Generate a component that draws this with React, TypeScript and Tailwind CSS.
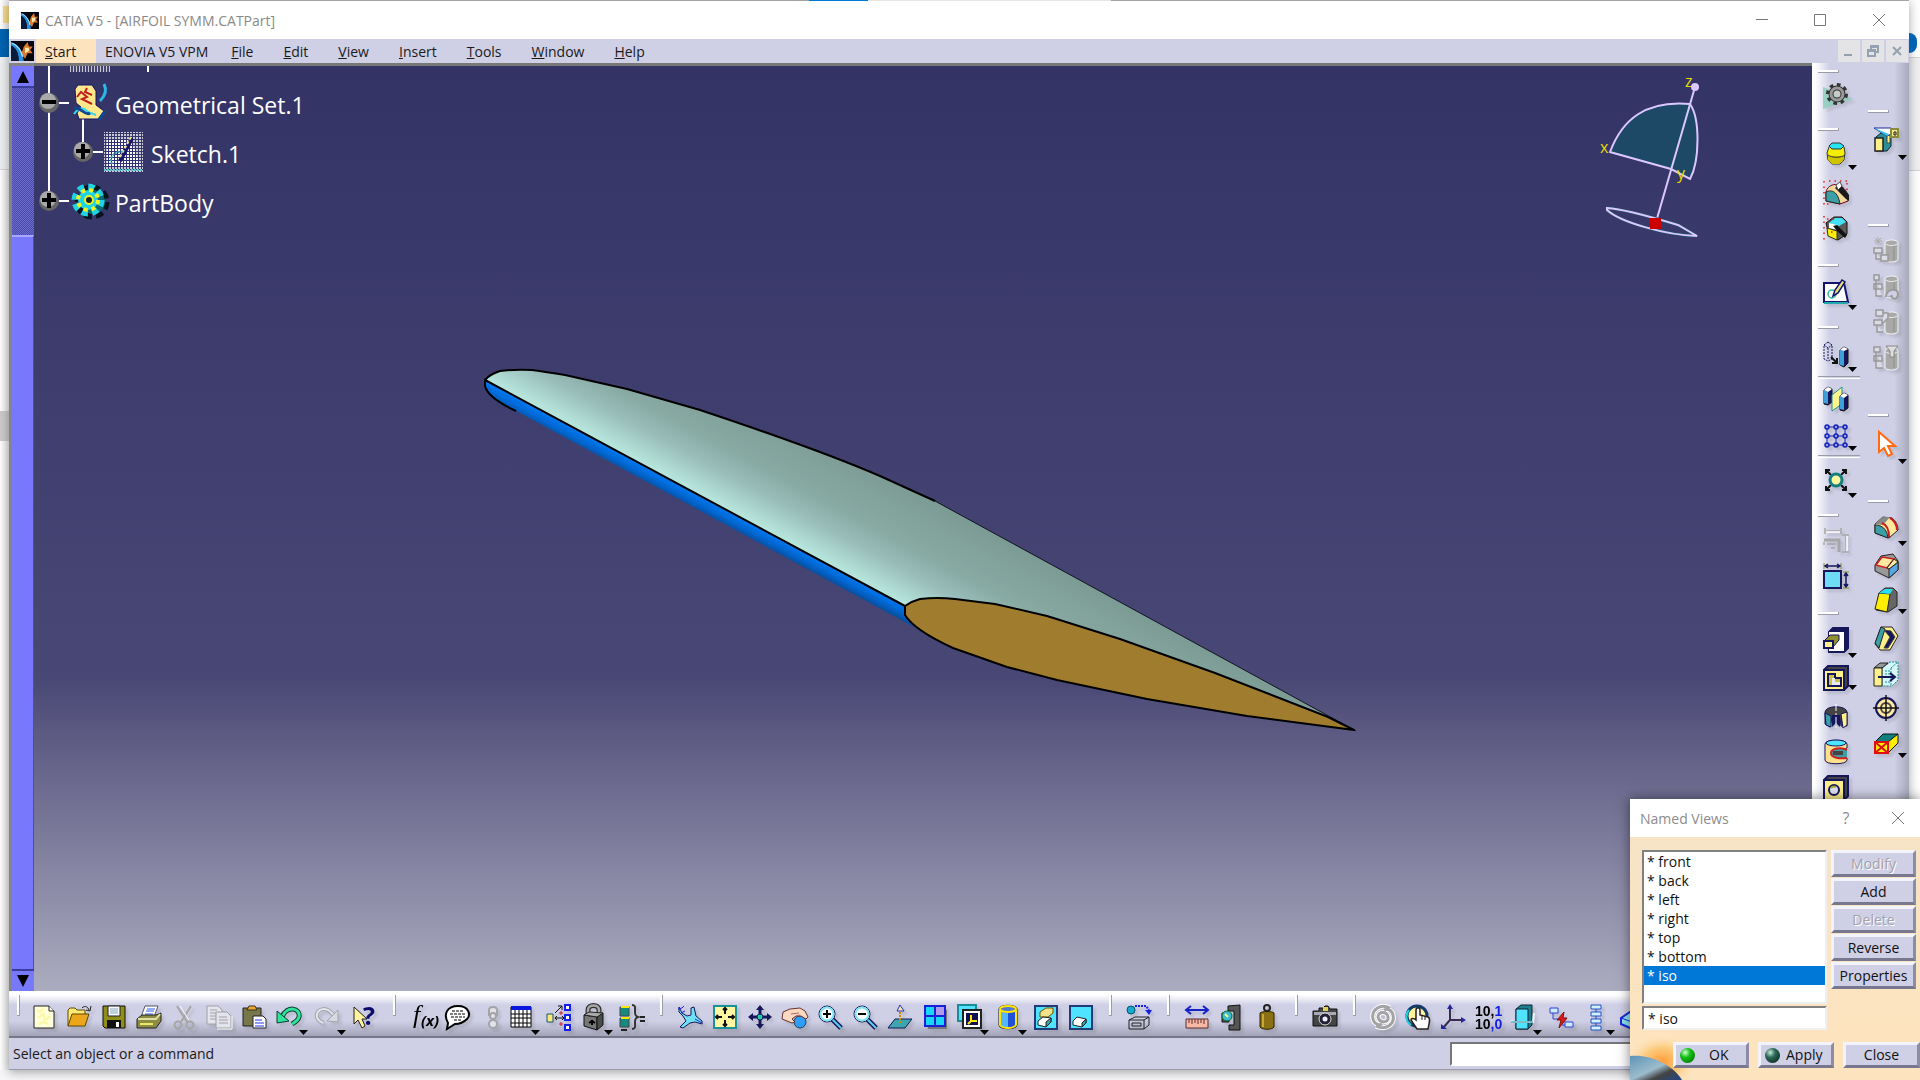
import React from "react";

const N = "#16165a";
const TEAL = "#3b9fa6";
const CREAM = "#fff08c";
const CYAN = "#4fe3ff";

const grayCylinder = (
  <>
    <path d="M12 6c0-4 13-4 13 0v16c0 4-13 4-13 0z" fill="#a9a9a9" stroke="#f4f4f4" />
    <path d="M13 7c2 2 9 2 11 0" stroke="#eee" fill="none" />
    <path d="M21 9v14" stroke="#8f8f8f" />
  </>
);

const icons: Record<string, React.ReactNode> = {
  newFile: (
    <>
      <path d="M3 2h15l5 5v17H3z" fill="#ffffd9" stroke="#222" />
      <path d="M6 6l3 2 3-3M7 14l5-4 2 6 5-4M8 20l4-2 5 2" stroke="#fdf7a0" fill="none" strokeWidth="2" />
      <path d="M18 2v5h5" fill="#fff" stroke="#222" />
    </>
  ),
  open: (
    <>
      <path d="M2 22V6l2-2h5l2 2h8v4" fill="#ffe873" stroke="#5a4a00" />
      <path d="M2 22l4-12h17l-4 12z" fill="#eda51c" stroke="#5a4a00" />
      <path d="M16 4c3-3 6-1 7 2M25 2l-1 5-4-1" fill="none" stroke="#222" />
    </>
  ),
  save: (
    <>
      <path d="M2 2h22v22H4l-2-2z" fill="#8f8f17" stroke="#111" />
      <path d="M7 2h12v10H7z" fill="#f4f8ff" stroke="#222" />
      <path d="M9 5h8M9 7h8M9 9h8" stroke="#8ab" />
      <path d="M6 16h14v8H6z" fill="#111" />
      <path d="M15 18h3v5h-3z" fill="#fff" />
    </>
  ),
  print: (
    <>
      <path d="M9 2h13l-4 11H5z" fill="#fff" stroke="#556" />
      <path d="M11 5h8M10 7h8M9 10h8" stroke="#2a5cff" />
      <path d="M1 15l5-4h14l5-2v8l-5 7H1z" fill="#8c8c45" stroke="#222" />
      <path d="M2 15h18l4-5" fill="none" stroke="#dfe0a4" strokeWidth="2" />
      <path d="M4 20h13" stroke="#e9e96a" strokeWidth="2" />
    </>
  ),
  cut: (
    <g stroke="#a6a6a6" fill="none" strokeWidth="2">
      <path d="M6 2l10 16M20 2L10 18" />
      <circle cx="7" cy="21" r="3.5" />
      <circle cx="19" cy="21" r="3.5" />
      <path d="M9 2l9 14" stroke="#fff" strokeWidth="1" />
    </g>
  ),
  copy: (
    <g stroke="#a0a0a0" fill="#e4e4ef">
      <path d="M1 2h11l4 4v14H1z" />
      <path d="M4 6h7M4 9h8M4 12h8M4 15h6" />
      <path d="M10 8h11l4 4v12H10z" />
      <path d="M13 13h8M13 16h9M13 19h9" />
      <path d="M26 12v13H11" stroke="#fff" fill="none" />
    </g>
  ),
  paste: (
    <>
      <path d="M2 4h18v18H2z" fill="#77774a" stroke="#222" />
      <path d="M6 6l2-4h6l2 4z" fill="#f5a623" stroke="#333" />
      <path d="M12 12h10l3 3v9H12z" fill="#fff" stroke="#223" />
      <path d="M14 16h7M14 19h9M14 22h9" stroke="#1c35e8" />
    </>
  ),
  undo: (
    <>
      <path d="M6 13C11 1 25 4 23 13c-1 4-4 5-7 7" fill="none" stroke="#0c3d33" strokeWidth="5" />
      <path d="M6 13C11 1 25 4 23 13c-1 4-4 5-7 7" fill="none" stroke="#2fe39c" strokeWidth="3" />
      <path d="M1 7v12l12-2z" fill="#2fe39c" stroke="#0c3d33" />
    </>
  ),
  redo: (
    <>
      <path d="M20 13C15 1 1 4 3 13c1 4 4 5 6 6" fill="none" stroke="#a4a4a8" strokeWidth="4" />
      <path d="M20 13C15 1 1 4 3 13c1 4 4 5 6 6" fill="none" stroke="#e6e6ef" strokeWidth="2" />
      <path d="M24 6v12l-11-1z" fill="#d8d8e2" stroke="#a4a4a8" />
    </>
  ),
  help: (
    <>
      <path d="M2 3v17l4-4 4 8 3-2-3-7h5z" fill="#fff3a0" stroke="#222" />
      <text x="11" y="21" fontSize="25" fontWeight="bold" fill="#0b0b6b" fontFamily="Open Sans, sans-serif">?</text>
    </>
  ),
  fx: (
    <>
      <text x="3" y="19" fontSize="26" fontStyle="italic" fill="#000" fontFamily="Liberation Serif, serif">f</text>
      <text x="11" y="22" fontSize="15" fontWeight="bold" fontStyle="italic" fill="#000" fontFamily="Open Sans, sans-serif">(x)</text>
    </>
  ),
  bubble: (
    <>
      <path d="M3 19C-2 10 2 2 13 2s13 9 9 13-9 5-12 5L2 25z" fill="#fff" stroke="#000" strokeWidth="2" />
      <path d="M7 7h12M5 10h16M6 13h14M9 16h8" stroke="#000" strokeDasharray="3 1" />
    </>
  ),
  chain: (
    <g fill="#e2e2ea" stroke="#a4a4a8" strokeWidth="2">
      <path d="M9 12V6c0-4 8-4 8 0v6" />
      <circle cx="13" cy="12" r="3" />
      <circle cx="13" cy="20" r="4" />
    </g>
  ),
  table: (
    <>
      <path d="M3 3h20v20H3z" fill="#fff" stroke="#000" />
      <path d="M3 2h20v4H3z" fill="#0a16e0" />
      <path d="M3 10h20M3 14h20M3 19h20M7 6v17M11 6v17M15 6v17M19 6v17" stroke="#000" />
    </>
  ),
  tree: (
    <>
      <path d="M1 10h6v8H1z" fill="#ffe873" stroke="#157" />
      <path d="M19 1h5v5h-5zM19 11h5v5h-5zM19 21h5v5h-5z" fill="#fff" stroke="#1420e8" strokeWidth="2" />
      <path d="M9 14h9M9 9l7-7M16 12l2 2-2 2M12 2h4v4M11 12l-2 2 2 2" fill="none" stroke="#111" />
      <path d="M15 7v4M13 9h4M15 18v4M13 20h4" stroke="#d0202c" />
    </>
  ),
  lock: (
    <>
      <path d="M7 12V6c0-6 11-6 11 0v7" fill="none" stroke="#333" strokeWidth="5" />
      <path d="M7 12V6c0-6 11-6 11 0v7" fill="none" stroke="#a8a8a8" strokeWidth="2.500" />
      <path d="M3 11l13 2v13L3 22z" fill="#777" stroke="#111" />
      <path d="M16 13l6-4v12l-6 5z" fill="#4c4c4c" stroke="#111" />
      <path d="M3 11l5-3 14 1-6 4z" fill="#aaa" stroke="#222" />
      <path d="M11 16v5M8 19l3-2 3 2" stroke="#000" strokeWidth="2" />
    </>
  ),
  formula: (
    <>
      <path d="M1 3h9v9H1zM1 14h9v9H1z" fill="#148a80" stroke="#444" />
      <path d="M2 3h8M2 14h8" stroke="#ffe600" strokeWidth="2" />
      <path d="M13 1c4 0 3 3 3 6s0 5 3 6c-3 1-3 3-3 6s1 6-3 6" fill="none" stroke="#333" strokeWidth="2" />
      <path d="M21 13h5M21 17h5M2 26h6" stroke="#222" strokeWidth="2" />
    </>
  ),
  plane: (
    <>
      <path d="M2 3l3 6 5 3 4-1V4l3-1 2 9 6 5v3l-7-2-5 1-7 5-3-1 6-6-3-5-4-4z" fill="#6fe0f5" stroke={N} />
      <path d="M1 5l4-1 2-2M4 9l4-2M18 15l7 4" stroke="#1a27e0" fill="none" />
    </>
  ),
  fit: (
    <>
      <path d="M2 2h22v22H2z" fill="#fff8a0" stroke="#1b9299" strokeWidth="2" />
      <path d="M13 4v6M13 16v6M4 13h6M16 13h6M11 6l2-2 2 2M11 20l2 2 2-2M6 11l-2 2 2 2M20 11l2 2-2 2" stroke="#111" fill="none" strokeWidth="2" />
    </>
  ),
  pan: (
    <>
      <path d="M13 3v20M3 13h20" stroke={N} strokeWidth="3" />
      <path d="M13 1l4 5H9zM13 25l4-5H9zM1 13l5-4v8zM25 13l-5-4v8z" fill={N} />
      <circle cx="13" cy="13" r="3" fill="#2ca" stroke={N} />
    </>
  ),
  rotate: (
    <>
      <circle cx="18" cy="18" r="6" fill="#2f9cf5" stroke="#146" />
      <path d="M1 8l7-3 10-1 5 3 3 6-2 2-5-3h-5l-4 3 3 3-3 1-5-2-5-2z" fill="#fbd9c0" stroke="#633" />
      <path d="M9 10l8-1M14 12l4-1" stroke="#a66" />
    </>
  ),
  zoomIn: (
    <>
      <path d="M15 15l9 9" stroke={N} strokeWidth="5" />
      <path d="M15 15l9 9" stroke="#59d4f0" strokeWidth="2" />
      <circle cx="10" cy="10" r="8" fill="#fff" stroke={N} />
      <circle cx="10" cy="10" r="6.500" fill="none" stroke="#7be4ef" strokeWidth="2" />
      <path d="M10 6v8M6 10h8" stroke="#000" strokeWidth="2" />
    </>
  ),
  zoomOut: (
    <>
      <path d="M15 15l9 9" stroke={N} strokeWidth="5" />
      <path d="M15 15l9 9" stroke="#59d4f0" strokeWidth="2" />
      <circle cx="10" cy="10" r="8" fill="#fff" stroke={N} />
      <circle cx="10" cy="10" r="6.500" fill="none" stroke="#7be4ef" strokeWidth="2" />
      <path d="M6 10h8" stroke="#000" strokeWidth="2" />
    </>
  ),
  normal: (
    <>
      <path d="M8 15h17l-7 9H1z" fill="#3ba5b0" stroke={N} />
      <path d="M13 19V8" stroke="#c78a00" strokeWidth="2" strokeDasharray="2 1" />
      <path d="M10 7l3-6 4 6z" fill="#ffe9a0" stroke="#2030d0" />
    </>
  ),
  multi: (
    <>
      <path d="M6 6h19v19H6z" fill="#777" />
      <path d="M3 2h20v20H3z" fill="#19d7f5" stroke="#1820d8" strokeWidth="2" />
      <path d="M13 2v20M3 12h20" stroke="#1820d8" strokeWidth="2" />
      <path d="M14 3h8v8h-8z" fill="#b09be8" />
    </>
  ),
  views: (
    <>
      <path d="M1 1h18v16H1z" fill={CYAN} stroke="#1b8c96" strokeWidth="2" />
      <path d="M6 6h18v18H6z" fill="#fff" stroke="#222" strokeWidth="2" />
      <path d="M9 9h12v12H9z" fill="#101050" />
      <path d="M14 11v6h6M14 17l-3 3" stroke="#ffe600" strokeWidth="2" fill="none" />
    </>
  ),
  cylinder: (
    <>
      <path d="M4 5c0-5 18-5 18 0v16c0 5-18 5-18 0z" fill="#1e50d8" stroke="#111" />
      <path d="M6 7v14c2 3 4 3 7 3V9c-3 0-5 0-7-2z" fill="#53b6ff" />
      <ellipse cx="13" cy="5" rx="8" ry="3" fill="#5577cc" stroke="#ffe600" strokeWidth="2" />
      <path d="M5 6v15c3 4 13 4 16 0V6" fill="none" stroke="#ffe600" strokeWidth="2" />
    </>
  ),
  hideShow: (
    <>
      <path d="M2 2h22v23H2z" fill={CYAN} stroke="#223a78" strokeWidth="2" />
      <path d="M7 8l6-4h7v5l-5 4H7z" fill="#efe28a" stroke="#665500" />
      <path d="M5 17l5-4 8 1v4l-5 5-8-2z" fill="#fff" stroke="#222" />
      <path d="M13 18l5-4v4l-5 5z" fill={TEAL} stroke="#222" />
    </>
  ),
  swap: (
    <>
      <path d="M2 2h22v23H2z" fill={CYAN} stroke="#223a78" strokeWidth="2" />
      <path d="M5 17l4-4 9 2v4l-4 4-9-2z" fill="#fff" stroke="#222" />
      <path d="M14 19l4-4v4l-4 4z" fill={TEAL} stroke="#222" />
    </>
  ),
  catalog: (
    <>
      <circle cx="5" cy="6" r="4" fill="#18a8d0" stroke="#056" />
      <path d="M9 2h11l3 4" stroke="#1420e8" fill="none" strokeWidth="2" strokeDasharray="2 1" />
      <path d="M19 6h7l-3 5z" fill="#1420e8" />
      <path d="M3 16l6-3h14v8l-5 4H3zM3 16h15v9M18 16l5-3M6 19h9v3H6z" fill="none" stroke="#222" />
    </>
  ),
  ruler: (
    <>
      <path d="M3 6h20M7 2L2 6l5 4M19 2l5 4-5 4" stroke="#1722c8" fill="none" strokeWidth="2" />
      <path d="M2 15h22v9H2z" fill="#f7b9a4" stroke="#5b2c2c" />
      <path d="M5 15v4M8 15v5M11 15v4M14 15v5M17 15v4M20 15v5" stroke="#5b2c2c" />
    </>
  ),
  caliper: (
    <>
      <path d="M9 2l12-1v25H10v-5h5V7H9z" fill="#555" stroke="#111" />
      <path d="M3 9h7v9H3z" fill="#555" stroke="#111" />
      <circle cx="8" cy="12" r="5" fill="#3bbdd0" stroke="#163" />
      <path d="M6 10l3 3" stroke="#ff8" strokeWidth="2" />
    </>
  ),
  weight: (
    <>
      <circle cx="13" cy="4" r="3" fill="none" stroke="#222" strokeWidth="2" />
      <path d="M6 9c2-2 12-2 14 0v14c-2 3-12 3-14 0z" fill="#8a7012" stroke="#2b2200" />
      <path d="M9 10v13" stroke="#c7a83a" strokeWidth="2" />
    </>
  ),
  camera: (
    <>
      <path d="M1 7h6V4h4L13 2h3l2 3h7v17H1z" fill="#444" stroke="#111" />
      <path d="M2 8h22v3H2z" fill="#a9a9b4" />
      <path d="M11 3h5v4h-5z" fill="#e2d25a" />
      <circle cx="13" cy="15" r="6" fill="#223" stroke="#ddd" />
      <circle cx="13" cy="15" r="2.500" fill="#eef" />
    </>
  ),
  swirl: (
    <g fill="none">
      <path d="M20 4C10-1 1 6 3 15c1 5 6 7 9 5M6 22c10 5 19-2 17-11-1-5-6-7-9-5M8 13c0-6 9-6 10 0s-8 7-10 0z" stroke="#fff" strokeWidth="5" />
      <path d="M20 4C10-1 1 6 3 15c1 5 6 7 9 5M6 22c10 5 19-2 17-11-1-5-6-7-9-5M8 13c0-6 9-6 10 0s-8 7-10 0z" stroke="#a3a3a6" strokeWidth="3" />
    </g>
  ),
  hand: (
    <>
      <circle cx="12" cy="12" r="10" fill="#fff39a" stroke="#123a6b" strokeWidth="3" />
      <path d="M4 6a10 10 0 0 0 2 15" stroke="#1fd1d9" strokeWidth="2" fill="none" />
      <path d="M11 6c0-3 4-3 4 0v5l8 2c3 1 1 7 0 12H12l-6-9c0-2 3-2 5 0z" fill="#fff" stroke="#222" strokeWidth="1.500" />
      <path d="M17 12v4M20 13v3" stroke="#222" />
    </>
  ),
  axis: (
    <>
      <path d="M10 16V3M10 16h13M10 16l-7 8" stroke="#3a2a50" strokeWidth="2" />
      <path d="M7 5l3-5 3 5zM21 13l5 3-5 3zM1 20v5h6z" fill="#26269c" />
    </>
  ),
  digits: (
    <>
      <text x="0" y="12" fontSize="14" fontWeight="bold" fill="#000" fontFamily="Liberation Sans, sans-serif">
        10,<tspan fill="#1420e8">1</tspan>
      </text>
      <text x="0" y="25" fontSize="14" fontWeight="bold" fill="#000" fontFamily="Liberation Sans, sans-serif">
        10<tspan fill="#1420e8">,0</tspan>
      </text>
    </>
  ),
  stock: (
    <>
      <path d="M6 5l5-4h11v20l-4 4H6z" fill="#1b7f8c" stroke="#123" />
      <path d="M6 5h12v20H6z" fill={CYAN} stroke="#123" />
      <path d="M2 16v2h21l1-9" fill="none" stroke="#e8f8ff" strokeWidth="2" />
      <path d="M1 18h22" stroke="#1b7f8c" />
    </>
  ),
  flash: (
    <>
      <path d="M2 4h8v5H2zM17 18h8v5h-8z" fill="#cfeaff" stroke="#2b44d8" />
      <path d="M5 9v6h6M14 21h3" stroke="#2b44d8" fill="none" />
      <path d="M16 8l-7 8h4l-2 8 8-10h-4z" fill="#e01818" stroke="#801010" />
    </>
  ),
  bars: (
    <>
      <path d="M13 1v24" stroke="#2b44d8" />
      <path d="M8 1h10v4H8zM8 8h10v4H8zM8 15h10v4H8zM8 22h10v4H8z" fill="#d3f1f6" stroke="#2352c8" />
    </>
  ),
  solid: (
    <>
      <path d="M12 6l12-5v18l-10 7-14-6v-6z" fill="#8fe9f5" stroke="#1a27e0" strokeWidth="2" />
      <path d="M0 14l14 5M14 19v7M14 19L24 9" stroke="#1a27e0" />
    </>
  ),
  gear: (
    <>
      <path d="M0 6v22l30-10z" fill="#8ecfbd" opacity=".85" />
      <circle cx="14" cy="13" r="9" fill="none" stroke="#333" strokeWidth="4" strokeDasharray="3.500 3.500" />
      <circle cx="14" cy="13" r="6" fill="#c4ccc8" stroke="#333" strokeWidth="5" />
      <circle cx="14" cy="13" r="6" fill="none" stroke="#999" strokeWidth="3" />
    </>
  ),
  barrel: (
    <>
      <path d="M6 6l2-3h10l3 3 1 6-1 7-4 4H9l-4-4-1-7z" fill="#f6ee00" stroke="#333" />
      <path d="M5 15h16l-1 5-4 3H9l-4-4z" fill="#cfc400" />
      <path d="M6 5l3-3h8l4 3-3 3H9z" fill="#26e5f5" stroke="#333" />
      <path d="M5 14c4 3 13 3 17 0" fill="none" stroke="#333" />
    </>
  ),
  dots: (
    <>
      <path d="M3 13c2-9 16-12 22 3v6l-8 3-14-3z" fill="#f4d89a" stroke="#702" />
      <path d="M3 13c6-3 12 0 14 12L3 22z" fill={TEAL} stroke="#222" />
      <path d="M12 9l5-4 9 11v6l-3-2z" fill="#1a1a1a" />
      <path d="M13 6l4-3 2 4-4 4z" fill="#fff" stroke="#444" />
      <path d="M1 2v24M6 2h18M4 25h4M24 4v8" stroke="#e02020" strokeWidth="1.500" strokeDasharray="1.500 4" />
    </>
  ),
  cube: (
    <>
      <path d="M3 8l8-6h8l5 5v12l-9 6-9-4z" fill="#5a5a5a" stroke="#111" />
      <path d="M4 13l10 3v9l-9-4z" fill="#ffee00" stroke="#333" />
      <path d="M6 8l6-5h7l4 4-7 4z" fill="#43dff5" />
      <path d="M6 8l8 2 1 5-9-2z" fill="#fff" />
      <path d="M10 11l4-1 10 10-2 3-7-6z" fill="#111" />
      <path d="M1 1v24M4 4h9M8 17h5" stroke="#e02020" strokeWidth="1.500" strokeDasharray="1.500 4" />
    </>
  ),
  sketch: (
    <>
      <path d="M1 4h20l4 19H1z" fill="#fff" stroke="#14146e" strokeWidth="2" />
      <path d="M1 24h24" stroke="#2aa" strokeWidth="2" />
      <circle cx="9" cy="15" r="4" fill="none" stroke="#3b9" strokeWidth="1.500" />
      <path d="M10 17l2-6 7-10 3 2-7 11z" fill="#e6e07a" stroke="#14146e" strokeWidth="1.500" />
    </>
  ),
  translate: (
    <>
      <path d="M5 1l4 3v14l-4 2-4-2V4zM1 4l4 3 4-3M5 7v12" fill="none" stroke={N} strokeDasharray="2 1" />
      <path d="M8 16l6 6M14 17v5H9" stroke="#111" strokeWidth="2" fill="none" />
      <path d="M17 9l4-3 4 2v14l-4 4-4-2z" fill={N} stroke="#111" />
      <path d="M17 9l4 1v15l-4-1z" fill="#3f9fd8" />
      <path d="M17 9l4-3 4 2-4 2z" fill="#fff" />
    </>
  ),
  mirror: (
    <>
      <path d="M1 4l4-3 4 2v13l-4 3-4-1z" fill={N} stroke="#111" />
      <path d="M1 4l4 2v12l-4-1z" fill="#3f9fd8" />
      <path d="M9 9l10-8v17L9 25z" fill="#fff48e" stroke="#1a8f8f" />
      <path d="M17 10l4-3 4 2v13l-4 3-4-1z" fill={N} stroke="#111" />
      <path d="M17 10l4 2v12l-4-1z" fill="#3f9fd8" />
      <path d="M1 4l4-3 4 2-4 3zM17 10l4-3 4 2-4 3z" fill="#fff" />
    </>
  ),
  pattern: (
    <g stroke="#1320b8" fill="#9aa0d8" strokeWidth="1.500">
      <path d="M4 3h18M4 12h18M4 21h18M4 3v18M13 3v18M22 3v18" fill="none" strokeWidth="1" />
      {[3, 12, 21].map((y) => [4, 13, 22].map((x) => <circle key={`${x}-${y}`} cx={x} cy={y} r="2" />))}
    </g>
  ),
  scale: (
    <>
      <path d="M3 7V3h4M19 3h4v4M3 19v4h4M23 19v4h-4M3 3l5 5M23 3l-5 5M3 23l5-5M23 23l-5-5" fill="none" stroke="#111" strokeWidth="2" />
      <circle cx="13" cy="13" r="6" fill="#fff7a0" stroke="#137f7f" strokeWidth="3" />
    </>
  ),
  dimsGray: (
    <g stroke="#a6a6a8" fill="none" strokeWidth="1.500">
      <path d="M2 1v6M18 1v6M3 4h14M19 8h7M19 25h7M23 9v15M4 17h9M8 21h4M1 15v3" />
      <path d="M1 13h15v12" strokeWidth="3" />
      <path d="M3 5h14M24 9v15" stroke="#fff" />
    </g>
  ),
  dims: (
    <>
      <path d="M1 8h17v17H1z" fill="#6fdcf5" stroke={N} strokeWidth="2" />
      <path d="M1 0v6M18 0v6M20 9h6M20 25h6" stroke="#8b8b20" />
      <path d="M2 3h15M5 1L2 3l3 2M14 1l3 2-3 2M23 10v14M21 13l2-3 2 3M21 21l2 3 2-3" stroke={N} fill="none" strokeWidth="1.500" />
    </>
  ),
  pad: (
    <>
      <path d="M6 5l4-4h15v20l-4 4H6z" fill={N} stroke={N} strokeWidth="2" />
      <path d="M6 5h15v19H6z" fill="#fff" />
      <path d="M1 14l6-6h9v5l-6 7H1z" fill="#8f8f30" stroke={N} />
      <path d="M1 14h9v7H1z" fill={CREAM} stroke={N} strokeWidth="2" />
    </>
  ),
  pocket: (
    <>
      <path d="M1 5l4-4h20v20l-4 4H1z" fill="#444" stroke={N} strokeWidth="2" />
      <path d="M1 5h20v20H1z" fill={CREAM} stroke={N} strokeWidth="2" />
      <path d="M5 9h7v4h6v8H5z" fill="#c7c04a" stroke={N} strokeWidth="2" />
      <path d="M9 13h3v4h5v3H9z" fill="#e8e8f4" />
    </>
  ),
  shaft: (
    <>
      <path d="M2 9c1-7 21-7 22 0v14h-6l-1-8h-8l-2 9-5-3z" fill="#444" stroke={N} />
      <path d="M2 10l6 3v11l-5-2z" fill={TEAL} stroke={N} />
      <path d="M9 12h8v12l-4-4-4 4z" fill={N} />
      <path d="M18 11l6-2v13l-4 3z" fill={CREAM} stroke={N} />
      <path d="M13 1v24" stroke="#fff" strokeDasharray="7 2 2 2" />
    </>
  ),
  groove: (
    <>
      <path d="M2 5c0-5 22-5 22 0v4l-4 2v6l4 2v2c0 5-22 5-22 0z" fill="#ffe08c" stroke={N} />
      <ellipse cx="13" cy="4" rx="10" ry="3" fill={CYAN} stroke={N} />
      <path d="M24 11c-5-3-16-2-16 3s9 6 16 5" fill={TEAL} stroke="#d02020" strokeWidth="2" />
      <path d="M10 12h10v4H10z" fill="#444" />
    </>
  ),
  hole: (
    <>
      <path d="M1 5l4-4h20v20l-4 4H1z" fill="#444" stroke={N} strokeWidth="2" />
      <path d="M1 5h20v20H1z" fill={CREAM} stroke={N} strokeWidth="2" />
      <circle cx="11" cy="15" r="5" fill="#dfe4f7" stroke={N} strokeWidth="2" />
      <path d="M8 13a4 4 0 0 1 5-1" stroke="#a8a030" strokeWidth="2" fill="none" />
    </>
  ),
  clamp: (
    <>
      <path d="M3 10l5-4h10v13l-4 5H3z" fill="#2a8f96" stroke="#123" />
      <path d="M2 11h8v13H2z" fill={CREAM} stroke="#222" strokeWidth="1.500" />
      <path d="M14 8h3v8h-3z" fill={CREAM} stroke="#444" />
      <path d="M1 1h17v6l-4 2z" fill="#fff" stroke="#142a9c" />
      <path d="M1 1l13 8 2-2z" fill="#30c8f0" />
      <path d="M18 2h7v8h-7z" fill="#efe88a" stroke="#8a8a40" strokeWidth="2" />
      <path d="M21 5h2v3h-2z" stroke="#222" />
    </>
  ),
  grayA: (<>{grayCylinder}<path d="M5 0v8M1 4h8M2 1l6 6M8 1L2 7" stroke="#aaa" /><path d="M1 11h8v5H1zM8 18h7v6H8zM3 16v6h5" fill="#dcdce8" stroke="#999" strokeWidth="1.500" /></>),
  grayB: (<>{grayCylinder}<path d="M1 2h5v5H1zM1 11h8v5H1zM3 7v16h6" fill="#dcdce8" stroke="#999" strokeWidth="1.500" /><path d="M13 24c0-8 12-10 12-3s-8 5-6 1" fill="#cfcfe6" stroke="#999" strokeWidth="2" /></>),
  grayC: (<>{grayCylinder}<path d="M3 1h7v6H3zM1 11h8v5H1zM4 16v7h6M10 4h5v5l-5 5" fill="#dcdce8" stroke="#999" strokeWidth="1.500" /></>),
  grayD: (<>{grayCylinder}<path d="M1 2h6v5H1zM1 11h8v5H1zM3 7v16h7" fill="#dcdce8" stroke="#999" strokeWidth="1.500" /><path d="M13 1h12l-4 5v6h-4V6z" fill="#ddd" stroke="#888" /></>),
  cursor: (<path d="M6 1v20l5-4 4 8 4-2-4-8h7z" fill="#fff" stroke="#ff6a13" strokeWidth="2" />),
  fillet: (
    <>
      <path d="M2 9l8-7 9 1c4 3 6 8 6 12l-9 8L2 18z" fill="#ffe9a0" stroke="#222" />
      <path d="M2 9l8-7h7l-7 8z" fill="#888" />
      <path d="M2 10c7 0 12 4 13 13L2 18z" fill={TEAL} stroke="#222" />
      <path d="M9 8c5 2 7 7 7 14M17 3c4 2 7 7 7 12" fill="none" stroke="#cc1f1f" strokeWidth="2" />
    </>
  ),
  chamfer: (
    <>
      <path d="M8 3l12-2 5 7v9l-9 8-14-7v-6z" fill="#999" stroke="#222" />
      <path d="M16 16l9-7v8l-9 8z" fill="#55a8e0" stroke="#222" />
      <path d="M9 4l12 2-7 9-11-3z" fill="#ffe9a0" stroke="#cc1f1f" strokeWidth="1.500" />
      <path d="M21 6l4 3-9 7-2-1z" fill="#ffe9a0" stroke="#222" />
    </>
  ),
  draft: (
    <>
      <path d="M6 6l6-5h8l4 4v14l-9 6-12-2z" fill="#666" stroke="#222" />
      <path d="M6 6l11 1-3 18-12-3z" fill="#ffee00" stroke="#222" />
      <path d="M6 6l6-4h8l-3 5z" fill="#26dff5" />
    </>
  ),
  shell: (
    <>
      <path d="M8 2h11l6 9-8 14H7l-5-6z" fill={CREAM} stroke="#222" />
      <path d="M8 2l4 2-6 19-4-5z" fill={TEAL} stroke="#222" />
      <path d="M11 5l7 1 4 6-7 11h-4l6-11z" fill={N} stroke="#444" />
    </>
  ),
  thickness: (
    <>
      <path d="M9 7l8-6h8v18l-6 6H9z" fill="#d6f6f8" stroke="#1b8c96" strokeDasharray="2 1" />
      <path d="M9 7l8-6M18 7v18M18 7l7-6M12 10h5M12 13h5M12 21h5" stroke="#1b8c96" strokeDasharray="2 1" />
      <path d="M1 7l6-5h8L9 7z" fill="#999" stroke="#222" />
      <path d="M1 7h8v18H1z" fill={CREAM} stroke="#222" />
      <path d="M5 16h16M17 12l5 4-5 4" stroke={N} strokeWidth="2" fill="none" />
    </>
  ),
  target: (
    <>
      <circle cx="13" cy="13" r="10" fill="#ffe9a0" stroke={N} strokeWidth="2" />
      <circle cx="13" cy="13" r="5" fill="none" stroke="#444" strokeWidth="2" />
      <path d="M13 0v26M0 13h26" stroke="#111" strokeWidth="1.500" />
    </>
  ),
  removeFace: (
    <>
      <path d="M2 11l8-8h15l-8 8z" fill="#0f8080" stroke="#111" />
      <path d="M15 11l10-8v9l-10 10z" fill="#ffee00" stroke="#111" />
      <path d="M2 11h13v11H2z" fill="#ffee00" stroke="#e01010" strokeWidth="2" />
      <path d="M2 11l13 11M15 11L2 22" stroke="#e01010" strokeWidth="2" />
    </>
  ),
};

const labels: Record<string, string> = {
  newFile: "New", fx: "Formula", digits: "Dimension precision", removeFace: "Remove face",
};

function Icon({ name }: { name: string }) {
  return (
    <svg viewBox="0 0 26 26" className="size-[26px] shrink-0 overflow-visible drop-shadow-[3px_3px_1px_rgba(90,90,90,0.15)]" fill="none">
      {icons[name]}
    </svg>
  );
}

function Arrow() {
  return (
    <svg viewBox="0 0 9 5" className="h-[5px] w-[9px]">
      <path d="M0 0h9L4.500 5z" fill="#000" />
    </svg>
  );
}

type Item = { n: string; h?: string; arrow?: boolean };

const columnOne: Item[] = [
  { n: "grip" }, { n: "gear", h: "h-9" }, { n: "gap", h: "h-3" },
  { n: "grip" }, { n: "barrel", h: "h-10", arrow: true }, { n: "dots", h: "h-9" }, { n: "cube", h: "h-9" }, { n: "gap", h: "h-3.5" },
  { n: "grip" }, { n: "sketch", h: "h-11", arrow: true }, { n: "gap", h: "h-2" },
  { n: "grip" }, { n: "translate", h: "h-11", arrow: true },
  { n: "line" }, { n: "mirror", h: "h-10" }, { n: "pattern", h: "h-9", arrow: true },
  { n: "line" }, { n: "scale", h: "h-11", arrow: true }, { n: "gap", h: "h-2" },
  { n: "grip" }, { n: "dimsGray", h: "h-10" }, { n: "dims", h: "h-8" }, { n: "gap", h: "h-4" },
  { n: "grip" }, { n: "pad", h: "h-11", arrow: true }, { n: "pocket", h: "h-8", arrow: true },
  { n: "shaft", h: "h-11" }, { n: "groove", h: "h-7" }, { n: "hole", h: "h-11" },
];

const columnTwo: Item[] = [
  { n: "gap", h: "h-10" }, { n: "grip" }, { n: "clamp", h: "h-12", arrow: true }, { n: "gap", h: "h-14" },
  { n: "grip" }, { n: "grayA", h: "h-10" }, { n: "grayB", h: "h-8" }, { n: "grayC", h: "h-10" }, { n: "grayD", h: "h-8" }, { n: "gap", h: "h-9" },
  { n: "grip" }, { n: "cursor", h: "h-12", arrow: true }, { n: "gap", h: "h-7" },
  { n: "grip" }, { n: "fillet", h: "h-11", arrow: true }, { n: "chamfer", h: "h-8" }, { n: "draft", h: "h-9", arrow: true },
  { n: "shell", h: "h-10" }, { n: "thickness", h: "h-8" }, { n: "target", h: "h-9" }, { n: "removeFace", h: "h-9", arrow: true },
];

function ToolColumn({ items }: { items: Item[] }) {
  return (
    <div className="flex w-[50px] shrink-0 flex-col pl-1.5">
      {items.map((it, i) => {
        if (it.n === "gap") return <div key={i} className={`${it.h} shrink-0`} />;
        if (it.n === "line") return <div key={i} className="h-[3px] w-[42px] shrink-0 border-t border-b border-t-[#9a9aa8] border-b-white" />;
        if (it.n === "grip")
          return (
            <div key={i} className="flex h-2.5 shrink-0 items-center">
              <div className="h-[3px] w-[21px] border-r border-b border-[#9c9ca8] bg-white" />
            </div>
          );
        return (
          <button key={i} aria-label={labels[it.n] ?? it.n} className={`${it.h} relative flex w-9 shrink-0 items-center justify-center`}>
            <Icon name={it.n} />
            {it.arrow && <span className="absolute -right-[3px] bottom-1"><Arrow /></span>}
          </button>
        );
      })}
    </div>
  );
}

const bottomTools = [
  "newFile", "open", "save", "print", "cut", "copy", "paste", "undo+", "redo+", "help", "|",
  "fx", "bubble", "chain-", "table+", "tree", "lock+", "formula", "|",
  "plane", "fit", "pan", "rotate", "zoomIn", "zoomOut", "normal", "multi", "views+", "cylinder+", "hideShow", "swap", "|",
  "catalog", "|", "ruler", "caliper", "weight", "|", "camera", "|",
  "swirl", "hand", "axis", "digits", "stock+", "flash", "bars+", "solid",
];

function BottomToolbar() {
  return (
    <div className="flex h-[47px] shrink-0 overflow-hidden border-b-2 border-[#77778a] bg-[linear-gradient(180deg,#ffffff_0,#ffffff_4px,#cfcfe6_14px,#cfcfe6_30px,#a3a3b8_45px)] pt-1">
      <Grip className="w-[18px]" />
      {bottomTools.map((t, i) => {
        if (t === "|") return <Grip key={i} className="w-[23px]" />;
        const arrow = t.endsWith("+");
        const name = t.replace(/[+-]$/, "");
        return (
          <button
            key={i}
            aria-label={labels[name] ?? name}
            className={`relative flex h-11 shrink-0 items-center pl-1 ${arrow ? "w-[38px]" : t.endsWith("-") ? "w-7 pl-0" : "w-[35px]"}`}
          >
            <Icon name={name} />
            {arrow && <span className="absolute right-0.5 bottom-1"><Arrow /></span>}
          </button>
        );
      })}
    </div>
  );
}

function Grip({ className }: { className: string }) {
  return (
    <div className={`${className} flex shrink-0 justify-center`}>
      <div className="h-[21px] w-[3px] border-r border-b border-[#9c9ca8] bg-white" />
    </div>
  );
}

function Logo({ className }: { className: string }) {
  return (
    <svg viewBox="0 0 18 18" className={className} preserveAspectRatio="none">
      <rect width="18" height="18" fill="#05040c" />
      <path d="M10 5l3-4 1 4 3 0-2 3 2 3-4 0-2 5-3-4z" fill="#d9782a" />
      <path d="M11 6l3 0 0 3-3 2z" fill="#ffe9b0" />
      <path d="M0 1c6 2 9 8 10 17H6C6 11 4 6 0 4z" fill="#2b8fe0" />
      <path d="M0 4c5 3 6 8 6 14H0z" fill="#0a1a3a" />
      <path d="M1 2c4 2 7 6 8 12" stroke="#a8e4ff" fill="none" />
    </svg>
  );
}

function Wing() {
  return (
    <svg viewBox="34 66 1778 925" className="absolute inset-0 size-full" role="img" aria-label="Airfoil model">
      <defs>
        <linearGradient id="skin" gradientUnits="userSpaceOnUse" x1="695" y1="493" x2="757" y2="378">
          <stop offset="0" stopColor="#b9e8de" />
          <stop offset=".08" stopColor="#aedad2" />
          <stop offset=".25" stopColor="#98bcb9" />
          <stop offset=".42" stopColor="#88aaa3" />
          <stop offset=".85" stopColor="#7b9993" />
        </linearGradient>
        <linearGradient id="edge" gradientUnits="userSpaceOnUse" x1="695" y1="493" x2="687" y2="508">
          <stop offset="0" stopColor="#0078f0" />
          <stop offset=".4" stopColor="#006ad8" />
          <stop offset="1" stopColor="#0a468c" />
        </linearGradient>
      </defs>
      <path d="M485 380L905 606V614L914 627L520 413L510 407Q490 397 485 386Z" fill="url(#edge)" />
      <path d="M485 380Q490 374 500 371Q515 369 532 370Q546 372 565 375L627 389L700 410Q820 450 880 476L935 501L1356 731L905 606Z" fill="url(#skin)" />
      <path d="M516 411Q488 398 485 386V380Q490 374 500 371Q515 369 532 370Q546 372 565 375L627 389L700 410Q820 450 880 476L935 501M485 380L905 606" fill="none" stroke="#000" strokeWidth="2" />
      <path d="M935 501L1356 731" stroke="#11131f" />
      <path d="M905 606Q912 601 920 599Q937 597 955 599L995 604L1047 616L1120 639L1215 673L1328 717L1354 730L1247 716L1147 699L1057 680L1007 667L953 648Q914 630 905 615Z" fill="#a07c2e" stroke="#000" strokeWidth="2" strokeLinejoin="round" />
      <g stroke="#dcc8ff" strokeWidth="2" fill="none">
        <path d="M1610 152C1622 120 1645 100 1690 104C1700 118 1700 160 1690 179L1671 169Z" fill="#1d4866" />
        <path d="M1695 87L1656 222" />
        <path d="M1607 208C1625 209 1655 218 1678 225L1697 236C1665 235 1620 222 1607 210Z" stroke="#1d5a68" strokeWidth="3" />
        <path d="M1607 208C1625 209 1655 218 1678 225L1697 236C1665 235 1620 222 1607 210Z" />
        <circle cx="1695" cy="87" r="3" fill="#dcc8ff" />
      </g>
      <path d="M1650 218h11v11h-11z" fill="#cc0000" />
      <g fill="#e6dc00" fontFamily="Open Sans, sans-serif" fontSize="16">
        <text x="1685" y="87">z</text>
        <text x="1600" y="153">x</text>
        <text x="1677" y="179">y</text>
      </g>
    </svg>
  );
}

function Knob({ minus }: { minus?: boolean }) {
  return (
    <svg viewBox="0 0 30 22" className="h-[22px] w-[30px] shrink-0">
      <path d="M20 11h10" stroke="#fff" strokeWidth="2" />
      <ellipse cx="10" cy="11" rx="10" ry="10" fill="#666" />
      <ellipse cx="9" cy="9" rx="8" ry="8" fill="#a9a9a9" />
      <path d="M3 10h14" stroke="#000" strokeWidth="4" />
      {!minus && <path d="M10 3v15" stroke="#000" strokeWidth="4" />}
    </svg>
  );
}

function Tree() {
  return (
    <ul className="absolute top-0 left-[5px] font-['Open_Sans',sans-serif] text-[23px] text-white">
      <li aria-hidden="true" className="flex h-3 items-start">
        <span className="ml-[31px] h-1.5 w-10 bg-[repeating-linear-gradient(90deg,#c9c9d4_0,#c9c9d4_1px,#45456f_1px,#45456f_3px)]" />
        <span className="ml-[37px] h-1.5 w-0.5 bg-white" />
        <span className="absolute top-0 left-[9px] h-[135px] w-0.5 bg-white" />
        <span className="absolute top-[48px] left-[43px] h-[34px] w-0.5 bg-white" />
      </li>
      <li className="relative flex h-[49px] items-center">
        <Knob minus />
        <svg viewBox="0 0 40 40" preserveAspectRatio="xMinYMid" className="h-10 w-[46px]">
          <path d="M6 6l3-4h14l4 6v14l8 6-6 8H10l-2-6 4-6-5-4z" fill="#ffe88c" stroke="#15156a" />
          <path d="M8 14l4-5 6 5-5 2 10 5M18 5l-2 4 7 3" stroke="#c02020" strokeWidth="2" fill="none" />
          <path d="M5 31c5-7 10-7 14-2l8 3" stroke="#35d8f0" strokeWidth="2" fill="none" />
          <path d="M5 26c6-4 11 8 16 4M36 28l-6 9" stroke="#0f4a90" strokeWidth="3" fill="none" />
          <path d="M35 1c3 6 1 12-4 17" stroke="#2ab8e8" strokeWidth="3" fill="none" />
        </svg>
        <span className="pt-1.5">Geometrical Set.1</span>
      </li>
      <li className="relative flex h-[49px] items-center pl-[34px]">
        <Knob />
        <svg viewBox="0 0 40 42" className="h-[42px] w-10">
          <defs>
            <pattern id="weave" width="3" height="3" patternUnits="userSpaceOnUse">
              <path d="M0 0h2v2H0z" fill="#c8c8d8" />
            </pattern>
            <pattern id="paper" width="3" height="3" patternUnits="userSpaceOnUse">
              <path d="M0 0h2v2H0z" fill="#fff" />
            </pattern>
          </defs>
          <path d="M1 1h39v40H1z" fill="url(#weave)" />
          <path d="M4 9h24l11 27H4z" fill="#30307a" />
          <path d="M4 9h24l11 27H4z" fill="url(#paper)" />
          <path d="M29 7L17 30" stroke="#15156a" strokeWidth="4" />
          <path d="M28 6L17 26" stroke="#ede78a" strokeWidth="2" strokeDasharray="3 2" />
          <path d="M9 33c-4-8 5-14 11-12" stroke="#2aa0b0" strokeWidth="2" fill="none" strokeDasharray="2 1" />
          <path d="M1 39h39" stroke="#4cc" strokeWidth="2" strokeDasharray="2 1" />
        </svg>
        <span className="pt-1.5 pl-2">Sketch.1</span>
      </li>
      <li className="relative flex h-[49px] items-center">
        <Knob />
        <svg viewBox="0 0 40 40" preserveAspectRatio="xMinYMid" className="h-10 w-[46px]">
          <circle cx="23" cy="21" r="14" fill="none" stroke="#06131c" strokeWidth="7" strokeDasharray="7 4" />
          <circle cx="24" cy="21" r="12" fill="#086a76" />
          <circle cx="19" cy="19" r="13" fill="none" stroke="#1ed4e4" strokeWidth="7" strokeDasharray="6 4.200" />
          <circle cx="19" cy="19" r="10" fill="#1ed4e4" />
          <circle cx="19" cy="19" r="10" fill="none" stroke="#f2f21c" strokeWidth="4" strokeDasharray="4 4" />
          <circle cx="20" cy="19" r="4" fill="#123" stroke="#f2f21c" strokeWidth="2" />
        </svg>
        <span className="pt-1.5">PartBody</span>
      </li>
    </ul>
  );
}

const raised =
  "border-t-[3px] border-l-[3px] border-r-[3px] border-b-[3px] border-t-[#f3f3fb] border-l-[#f3f3fb] border-r-[#8c8ca6] border-b-[#77778f] bg-[#cfcfe6] leading-none";

function NamedViews() {
  const views = ["front", "back", "left", "right", "top", "bottom", "iso"];
  const actions = ["Modify", "Add", "Delete", "Reverse", "Properties"];
  return (
    <section role="dialog" aria-label="Named Views" className="absolute right-0 bottom-0 z-10 w-[290px] bg-[#fde4bf] text-[14px] text-[#111] shadow-[0_0_12px_rgba(0,0,0,0.5)]">
      <header className="flex h-[38px] items-center bg-white pl-2.5 text-[#8c8c8c]">
        <h2 className="flex-1">Named Views</h2>
        <button aria-label="Help" className="w-[60px] text-[16px]">?</button>
        <button aria-label="Close dialog" className="flex w-11 justify-center">
          <svg viewBox="0 0 12 12" className="size-3"><path d="M0 0l12 12M12 0L0 12" stroke="#777" /></svg>
        </button>
      </header>
      <div className="flex gap-1 bg-[linear-gradient(180deg,#f6e3c6,#fde4bf)] pt-[13px] pr-1 pl-3">
        <div className="flex flex-1 flex-col gap-0.5">
          <ul role="listbox" aria-label="Views" className="h-[154px] border-2 border-t-[#808080] border-r-[#f0f0f0] border-b-[#f0f0f0] border-l-[#808080] bg-white">
            {views.map((v) => (
              <li key={v} role="option" aria-selected={v === "iso"} className={v === "iso" ? "bg-[#0078d7] pl-[3px] leading-[19px] text-white" : "pl-[3px] leading-[19px]"}>
                * {v}
              </li>
            ))}
          </ul>
          <input aria-label="View name" defaultValue="* iso" className="h-6 w-full border-2 border-t-[#808080] border-r-[#f0f0f0] border-b-[#f0f0f0] border-l-[#808080] bg-white pl-1 outline-none" />
        </div>
        <div className="flex w-[85px] flex-col gap-px">
          {actions.map((a) => {
            const off = a === "Modify" || a === "Delete";
            return (
              <button key={a} disabled={off} className={`${raised} h-[27px] ${off ? "text-[#a2a2ac] [text-shadow:1px_1px_0_#fff]" : ""}`}>
                {a}
              </button>
            );
          })}
        </div>
      </div>
      <footer className="relative flex h-[50px] items-center justify-end gap-[9px] overflow-hidden bg-[#fde4bf]">
        <svg viewBox="0 0 70 46" className="absolute bottom-0 left-0 h-[46px] w-[70px]">
          <defs>
            <radialGradient id="glow"><stop offset="0" stopColor="#ff9c3c" /><stop offset=".5" stopColor="#fcc978" /><stop offset="1" stopColor="#fde4bf" stopOpacity="0" /></radialGradient>
            <linearGradient id="planet" x1="0" y1="0" x2="1" y2="1"><stop offset="0" stopColor="#5d93b8" /><stop offset=".5" stopColor="#9dbccc" /><stop offset=".7" stopColor="#444" /><stop offset="1" stopColor="#248" /></linearGradient>
          </defs>
          <ellipse cx="32" cy="28" rx="36" ry="28" fill="url(#glow)" />
          <path d="M0 22C20 20 42 30 52 46H0z" fill="url(#planet)" />
        </svg>
        <button className={`${raised} relative flex h-[26px] w-[76px] items-center gap-3.5 pl-1`}>
          <span className="size-[15px] rounded-full bg-[radial-gradient(circle_at_35%_30%,#d8ffd8,#12c012_35%,#046004)]" />OK
        </button>
        <button className={`${raised} relative flex h-[26px] w-[76px] items-center gap-1.5 pl-1`}>
          <span className="size-[15px] rounded-full bg-[radial-gradient(circle_at_35%_30%,#c8e8dc,#2a6a58_35%,#02140f)]" />Apply
        </button>
        <button className={`${raised} relative h-[26px] w-[77px]`}>Close</button>
      </footer>
    </section>
  );
}

const menus = ["File", "Edit", "View", "Insert", "Tools", "Window", "Help"];

export default function App() {
  return (
    <div className="relative flex h-screen flex-col overflow-hidden bg-[#f6f6f8] font-['Open_Sans',sans-serif] text-[14px] text-[#1a1a1a]">
      <div className="flex min-h-0 flex-1">
        <div className="flex w-[9px] shrink-0 flex-col bg-gradient-to-r from-white to-[#e6e6e6]">
          <div className="mt-1.5 mb-1.5 ml-[3px] h-[17px] bg-[#f7d98a]" />
          <div className="h-7 bg-[#0063b1]" />
          <div className="h-[113px] border-b border-[#d5d5d5] bg-[#eeeff1]" />
          <div className="mt-[241px] h-[30px] bg-[#cbcbcb]" />
        </div>

        <main className="z-[1] flex min-w-0 flex-1 flex-col border-b border-[#9a9aa8] bg-[#cfcfe6] shadow-[0_2px_10px_rgba(0,0,0,0.35)]">
          <div className="h-px shrink-0 bg-[linear-gradient(90deg,#a3a3a3_42.1%,#0078d7_42.1%,#0078d7_45.2%,#e5e5e5_45.2%,#e5e5e5_58%,#a3a3a3_58%)]" />
          <header className="flex h-[38px] shrink-0 items-center bg-white text-[#8a8a8a]">
            <Logo className="ml-3 h-[17px] w-[18px]" />
            <h1 className="flex-1 pl-1.5 text-[14px]">CATIA V5 - [AIRFOIL SYMM.CATPart]</h1>
            <button aria-label="Minimize" className="flex w-[58px] justify-center"><svg viewBox="0 0 12 12" className="size-3"><path d="M0 5.500h12" stroke="#777" /></svg></button>
            <button aria-label="Maximize" className="flex w-[58px] justify-center"><svg viewBox="0 0 12 12" className="size-3"><path d="M.5.5h11v11H.5z" stroke="#777" fill="none" /></svg></button>
            <button aria-label="Close" className="flex w-[60px] justify-center"><svg viewBox="0 0 12 12" className="size-3"><path d="M0 0l12 12M12 0L0 12" stroke="#777" /></svg></button>
          </header>
          <nav className="flex h-6 shrink-0 items-center bg-[#cfcfe6]">
            <Logo className="ml-[2px] mr-[2px] h-5 w-[23px]" />
            <button className="h-full w-[60px] bg-[#fde4bf] pl-[9px] text-left"><u>S</u>tart</button>
            <button className="pr-2 pl-[9px]">ENOVIA V5 VPM</button>
            {menus.map((m) => (
              <button key={m} className="px-[15px]"><u>{m[0]}</u>{m.slice(1)}</button>
            ))}
            <div className="ml-auto flex h-full items-center gap-0.5 pr-px">
              {["M1 11h8", "M1 6h7v6H1zM4 5V2h7v6H9M1 7h7M4 3h7", "M2 3l8 8M10 3l-8 8"].map((d) => (
                <button key={d} aria-label="Document window" className="flex h-[22px] w-[22px] items-center justify-center bg-[#e4e4e6]">
                  <svg viewBox="0 0 12 14" className="h-3.5 w-3"><path d={d} stroke="#93a1b0" strokeWidth="2" fill="none" /></svg>
                </button>
              ))}
            </div>
          </nav>

          <div className="flex min-h-0 flex-1">
            <div className="flex w-[25px] shrink-0 flex-col border-t-[3px] border-l-[3px] border-[#858585] bg-[#6262c4]">
              <button aria-label="Scroll up" className="flex h-[22px] items-center justify-center border-b-2 border-[#3c3c9c] bg-[#7878fc] pt-0.5"><svg viewBox="0 0 12 12" className="size-3"><path d="M6 0l6 12H0z" fill="#000" /></svg></button>
              <div className="h-[147px] bg-[repeating-conic-gradient(#4b4ba8_0_25%,#6a6ad0_0_50%)] bg-[length:2px_2px]" />
              <div className="flex-1 border-t-2 border-r border-t-[#a8a8ff] border-r-[#4c4cb0] bg-[#7878fc]" />
              <button aria-label="Scroll down" className="flex h-[22px] items-center justify-center border-t-2 border-[#3c3c9c] bg-[#7878fc]"><svg viewBox="0 0 12 12" className="size-3"><path d="M0 0h12L6 12z" fill="#000" /></svg></button>
            </div>
            <div className="relative min-w-0 flex-1 border-t-[3px] border-[#777] bg-[linear-gradient(180deg,#333366_0%,#484775_66%,#5f5c84_73%,#acacc0_100%)]">
              <Wing />
              <Tree />
            </div>
            <aside className="flex w-[97px] shrink-0 overflow-hidden bg-[linear-gradient(90deg,#ffffff_0,#ffffff_3px,#cfcfe6_18px,#cfcfe6_82px,#a9a9be_97px)] pt-[3px]">
              <ToolColumn items={columnOne} />
              <ToolColumn items={columnTwo} />
            </aside>
          </div>

          <BottomToolbar />
          <footer className="flex h-[31px] shrink-0 items-center justify-between pl-1">
            <span>Select an object or a command</span>
            <input aria-label="Power input" className="mr-[99px] h-6 w-[360px] border-2 border-t-[#777] border-r-white border-b-white border-l-[#777] bg-white outline-none" />
          </footer>
        </main>

        <div className="flex w-[11px] shrink-0 flex-col bg-white">
          <div className="relative z-[2] mt-[33px] h-5 w-2 rounded-r-full bg-[#0063b1]" />
          <div className="mt-1 h-[114px] border-y border-[#d5d5d5] bg-[#f0f0f2]" />
        </div>
      </div>
      <div className="h-2.5 shrink-0" />
      <NamedViews />
    </div>
  );
}
